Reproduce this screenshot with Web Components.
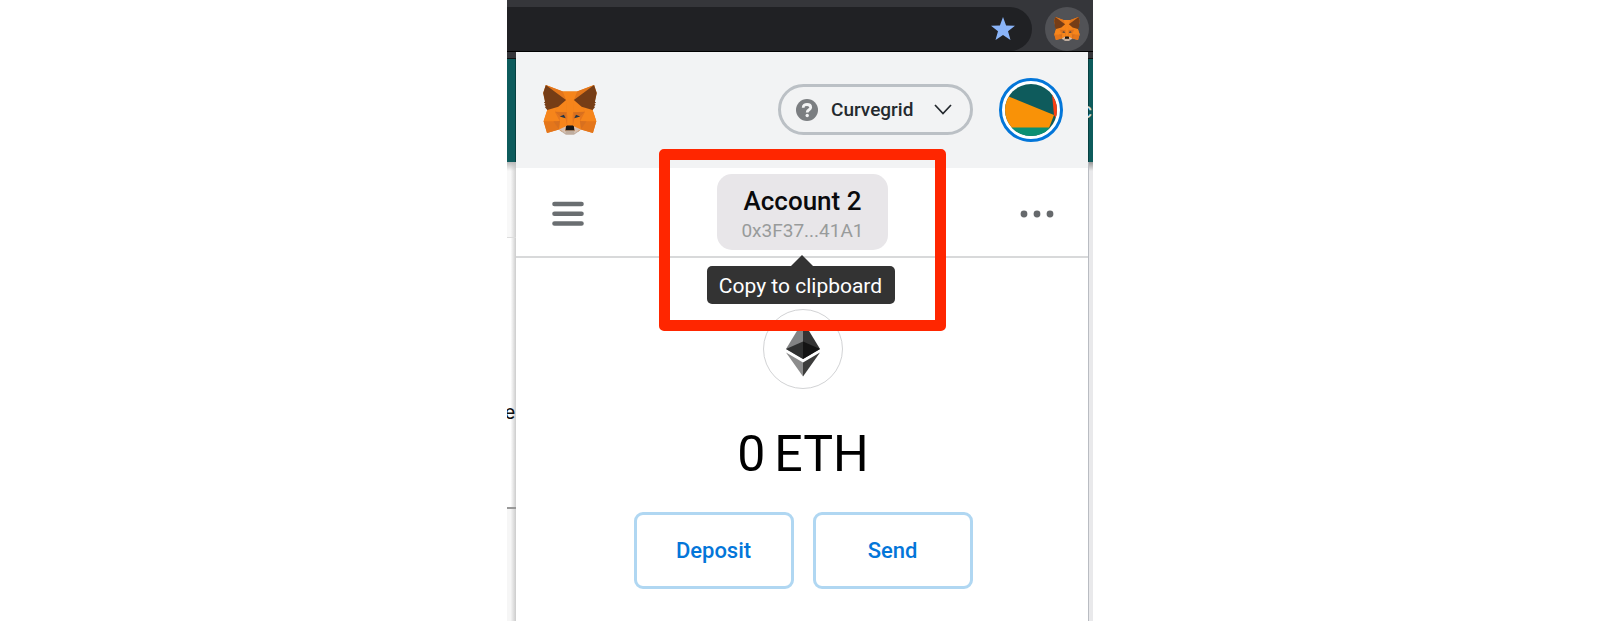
<!DOCTYPE html>
<html lang="en">
<head>
<meta charset="utf-8">
<meta name="viewport" content="width=device-width, initial-scale=1">
<title>MetaMask account</title>
<style>
body { margin: 0; background: #fff; font-family: Roboto, "Liberation Sans", sans-serif; }
</style>
</head>
<body>
<browser-shot>
  <browser-toolbar slot="toolbar"></browser-toolbar>
  <page-edge slot="left" side="left">e</page-edge>
  <wallet-popup slot="popup">
    <wallet-header slot="header" network="Curvegrid"></wallet-header>
    <account-bar slot="bar">
      <account-chip name="Account 2" address="0x3F37...41A1" tip="Copy to clipboard"></account-chip>
    </account-bar>
    <wallet-balance slot="balance"><span>0</span> <span>ETH</span></wallet-balance>
    <wallet-action slot="action">Deposit</wallet-action>
    <wallet-action slot="action">Send</wallet-action>
  </wallet-popup>
  <page-edge slot="right" side="right">c</page-edge>
</browser-shot>
<script>
const define = (name, render) => customElements.define(name, class extends HTMLElement {
  constructor() {
    super();
    this.attachShadow({ mode: 'open' });
  }
  connectedCallback() {
    const t = document.createElement('template');
    t.innerHTML = '<style>*{box-sizing:border-box}button{font:inherit;color:inherit;margin:0;padding:0;border:0;background:none}svg{display:block}</style>' + render(this);
    this.shadowRoot.replaceChildren(t.content.cloneNode(true));
  }
});

define('fox-logo', () => `
<style>:host{display:block} svg{width:100%;height:auto}</style>
<svg viewBox="31 35 257 238" aria-hidden="true">
<path fill="#ec7d1b" d="M44.4 35.5 125.6 65.8H193L274.1 35.5 286.8 73.4 267.2 153.5 284.8 207.7 268.5 263 211.8 247.4 200 256H118L106.8 247.4 50.1 263 33.9 207.7 51.3 153.5 31.8 73.4z"/>
<path fill="#e2761b" d="M274.1 35.5 174.6 109.4 193 65.8z"/>
<path fill="#e4761b" d="M44.4 35.5 143.1 110.1 125.6 65.8zM238.3 206.8 211.8 247.4 268.5 263 284.8 207.7zM33.9 207.7 50.1 263 106.8 247.4 80.3 206.8z"/>
<path fill="#f6851b" d="M267.2 153.5 214.9 138.2 230.8 162.1 207.1 208.1 238.3 207.7H284.8zM103.6 138.2 51.3 153.5 33.9 207.7H80.3L111.4 208.1 87.8 162.1zM174.6 164.6 177.9 106.9 193.1 65.8H125.6L140.6 106.9 144.1 164.6 145.3 182.8 145.4 227.6H173.1L173.3 182.8z"/>
<path fill="#f6851b" d="M103.6 138.200 87.800 162.100 144.100 164.600 142.100 104.100zM214.900 138.200 175.900 103.400 174.600 164.600 230.800 162.100z"/>
<path fill="#f6851b" d="M179.8 193.5 173.1 227.6 177.9 230.9 207.1 208.1 208.1 185.2zM110.6 185.2 111.4 208.1 140.6 230.9 145.4 227.6 138.8 193.5zM106.8 247.4 140.6 230.9 111.4 208.1zM177.9 230.9 211.8 247.4 207.1 208.1z"/>
<path fill="#d8701f" d="M106.8 247.4 111.6 206.8 80.3 207.7zM207 206.8 211.8 247.4 238.3 207.7zM230.8 162.1 174.6 164.6 179.8 193.5 188.1 176.1 208.1 185.2zM110.6 185.2 130.6 176.1 138.8 193.5 144.1 164.6 87.8 162.1z"/>
<path fill="#e4751f" d="M87.8 162.1 111.4 208.1 110.6 185.2zM208.1 185.2 207.1 208.1 230.8 162.1zM144.1 164.6 138.8 193.5 145.4 227.6 146.9 182.7zM174.6 164.6 171.9 182.6 173.1 227.6 179.8 193.5z"/>
<path fill="#233447" d="M138.8 193.5 110.6 185.2 130.5 176.1zM179.7 193.5 188 176.1 208 185.2z"/>
<path fill="#d7c1b3" d="M211.8 247.4 177.9 230.9 180.6 253 180.3 262.3zM106.8 247.4 138.3 262.3 138.1 253 140.6 230.9z"/>
<path fill="#c0ad9e" d="M180.3 262.3 180.6 253 178.1 250.8H140.4L138.1 253 138.3 262.3 106.8 247.4 117.8 256.4 140.1 271.9H178.4L200.8 256.4 211.8 247.4z"/>
<path fill="#161616" d="M177.9 230.9 173.1 227.6H145.4L140.6 230.9 138.1 253 140.4 250.8H178.1L180.6 253z"/>
<path fill="#763d16" d="M278.3 114.2 286.8 73.4 274.1 35.5 177.9 106.9 214.9 138.2 267.2 153.5 278.8 140 273.8 136.4 281.8 129.1 275.6 124.3 283.6 118.2zM31.8 73.4 40.3 114.2 34.9 118.2 42.9 124.3 36.8 129.1 44.8 136.4 39.8 140 51.3 153.5 103.6 138.2 140.6 106.9 44.4 35.5z"/>
</svg>`);

define('browser-shot', () => `
<style>
:host{display:flex;flex-direction:column;max-width:586px;min-height:100vh;margin:0 auto;overflow:hidden}
.row{flex:1;display:grid;grid-template-columns:9px minmax(0,1fr) 5px}
</style>
<slot name="toolbar"></slot>
<div class="row"><slot name="left"></slot><slot name="popup"></slot><slot name="right"></slot></div>`);

define('browser-toolbar', () => `
<style>
:host{display:flex;align-items:center;gap:13px;height:52px;padding:7px 4px 0 0;box-sizing:border-box;background:#35363a;border-bottom:1px solid #000}
.url{flex:1;height:44px;display:flex;align-items:center;justify-content:flex-end;padding-right:16px;background:#202124;border-radius:0 22px 22px 0}
.ext{width:44px;height:44px;border-radius:50%;background:#515256;display:grid;place-items:center}
fox-logo{width:26px}
</style>
<div class="url"><button aria-label="Bookmark this page"><svg width="26" height="26" viewBox="0 0 26 26"><path d="M13 1 16.1 9.4 25 9.7 18 15.2 20.5 24 13 18.900 5.500 24 8 15.200 1 9.700 9.900 9.400z" fill="#8ab4f8"/></svg></button></div>
<button class="ext" aria-label="MetaMask extension"><fox-logo></fox-logo></button>`);

define('page-edge', el => el.getAttribute('side') === 'left' ? `
<style>
:host{display:flex;flex-direction:column;overflow:hidden;min-width:0}
.top{height:7px;background:#35363a;border-bottom:1px solid #111}
.band{height:103px;background:#0d5b5c;border-right:1px solid #064041}
.a{height:76px;background:linear-gradient(#bbb,#0000 9px),linear-gradient(90deg,#f8f8f8 40%,#d0d0d0);border-bottom:1px solid #ddd}
.b{height:271px;display:flex;align-items:center;justify-content:flex-end;padding:78px 1px 0 0;font-size:20px;line-height:24px;color:#111;background:linear-gradient(90deg,#fff 40%,#ccc);border-bottom:2px solid #999}
.c{flex:1;background:linear-gradient(90deg,#f6f6f6 40%,#ccc)}
</style>
<div class="top"></div><div class="band"></div><div class="a"></div><div class="b"><slot></slot></div><div class="c"></div>` : `
<style>
:host{display:flex;flex-direction:column;overflow:hidden;min-width:0}
.top{height:7px;background:#35363a;border-bottom:1px solid #111}
.band{height:103px;display:flex;align-items:center;justify-content:flex-end;padding-right:1px;background:#0d5b5c;border-left:1px solid #064041;font-size:22px;line-height:24px;color:#cfdede}
.a{flex:1;background:linear-gradient(#999,#0000 9px),#e9e9eb;border-left:1px solid #b9bcc2}
</style>
<div class="top"></div><div class="band"><slot></slot></div><div class="a"></div>`);

define('wallet-popup', () => `
<style>
:host{display:flex;flex-direction:column;position:relative;background:#fff;min-width:0}
.body{display:flex;flex-direction:column;align-items:center;padding:51px 0 32px 2px}
.actions{display:flex;gap:19px;margin-top:28px}
.mark{position:absolute;top:97px;left:calc(50% - 143px);width:287px;height:182px;border:11px solid #ff2600;border-radius:5px;pointer-events:none}
</style>
<slot name="header"></slot>
<slot name="bar"></slot>
<div class="body"><slot name="balance"></slot><div class="actions"><slot name="action"></slot></div></div>
<div class="mark"></div>`);

define('wallet-header', el => `
<style>
:host{display:flex;align-items:center;height:116px;box-sizing:border-box;padding:0 25px 1px 27px;background:#f2f3f4}
fox-logo{width:54px;margin-right:auto}
.net{display:flex;align-items:center;height:51px;width:195px;padding:0 18px 0 15px;border:3px solid #bbc0c5;border-radius:26px;font-size:19px;line-height:24px;font-weight:500;color:#24292e}
.net span{margin:0 auto 0 13px}
.avatar{width:64px;height:64px;margin-left:26px;border:3px solid #0376d9;border-radius:50%;background:#fff;display:grid;place-items:center}
</style>
<fox-logo></fox-logo>
<button class="net"><svg width="22" height="22" viewBox="0 0 22 22"><circle cx="11" cy="11" r="11" fill="#7b7e81"/><path d="M7.200 8.700C7.200 6.400 8.900 5.500 11.100 5.500S14.700 6.700 14.700 8.400C14.700 10.800 11.200 10.700 11.200 13.400" fill="none" stroke="#f2f3f4" stroke-width="2.800"/><circle cx="11.200" cy="16.500" r="1.700" fill="#f2f3f4"/></svg><span>${el.getAttribute('network')}</span><svg width="18" height="11" viewBox="0 0 18 11"><path d="M1 1 9 9.500 17 1" fill="none" stroke="#24292e" stroke-width="1.700"/></svg></button>
<button class="avatar" aria-label="My accounts"><svg width="52" height="52" viewBox="0 0 52 52"><defs><clipPath id="r"><circle cx="26" cy="26" r="26"/></clipPath></defs><g clip-path="url(#r)"><path fill="#0e5b5c" d="M0 0h52v52H0z"/><path fill="#fb3f12" d="M47 10 52 10V36L49 31z"/><path fill="#f99207" d="M0 11 49 31 44 44H0z"/><path fill="#0b8f72" d="M0 43.500H44V52H0z"/></g></svg></button>`);

define('account-bar', () => `
<style>
:host{display:flex;align-items:center;justify-content:space-between;height:90px;box-sizing:border-box;padding:0 34px 0 35px;border-bottom:2px solid #d8d9da}
button{display:grid;place-items:center;padding-top:3px}
</style>
<button aria-label="Menu"><svg width="34" height="26" viewBox="0 0 34 26"><path d="M3.500 3H30.500M3.500 12.800H30.500M3.500 22.500H30.500" stroke="#6a6e71" stroke-width="4.600" stroke-linecap="round"/></svg></button>
<slot></slot>
<button aria-label="Account options"><svg width="34" height="8" viewBox="0 0 34 8" fill="#66696c"><circle cx="4" cy="4" r="3.400"/><circle cx="17" cy="4" r="3.400"/><circle cx="30" cy="4" r="3.400"/></svg></button>`);

define('account-chip', el => `
<style>
:host{display:block;position:relative}
.chip{display:flex;flex-direction:column;align-items:center;justify-content:center;width:171px;height:76px;padding-top:6px;border-radius:15px;background:#e8e6e9}
.name{font-size:26px;line-height:32px;font-weight:500;color:#0a0a0c}
.addr{font-size:19px;line-height:28px;color:#989b9b}
.tip{position:absolute;top:92px;left:50%;transform:translateX(-50%);margin-left:-2px;width:188px;height:38px;padding-top:1px;display:grid;place-items:center;border-radius:5px;background:#333;color:#fff;font-size:21px;line-height:24px;white-space:nowrap}
.tip::before{content:"";position:absolute;top:-11px;left:calc(50% - 10px);border:solid transparent;border-width:0 11px 11px;border-bottom-color:#333}
</style>
<button class="chip" aria-describedby="t"><span class="name">${el.getAttribute('name')}</span><span class="addr">${el.getAttribute('address')}</span></button>
<div class="tip" id="t" role="tooltip">${el.getAttribute('tip')}</div>`);

define('wallet-balance', () => `
<style>
:host{display:flex;flex-direction:column;align-items:center}
.coin{width:80px;height:80px;display:grid;place-items:center;border:1px solid #d2d3d5;border-radius:50%;background:#fff}
.sum{display:flex;gap:9px;margin-top:35px;font-size:50px;line-height:60px;color:#000}
</style>
<div class="coin"><svg width="34" height="56" viewBox="0 0 34 56" aria-hidden="true"><path fill="#828384" d="M17 0V38L0 28z"/><path fill="#343434" d="M17 0V38L34 28z"/><path fill="#2f3030" d="M17 20.500V38L0 28z"/><path fill="#141414" d="M17 20.500V38L34 28z"/><path fill="#8c8c8c" d="M0 31.500 17 41.500V55.500z"/><path fill="#3c3c3b" d="M34 31.500 17 41.500V55.500z"/></svg></div>
<div class="sum"><slot></slot></div>`);

define('wallet-action', () => `
<style>
:host{display:block}
button{width:160px;height:77px;border:3px solid #b0d7f2;border-radius:9px;background:#fff;color:#0376d9;font-size:22px;line-height:28px;font-weight:500}
</style>
<button><slot></slot></button>`);
</script>
</body>
</html>
